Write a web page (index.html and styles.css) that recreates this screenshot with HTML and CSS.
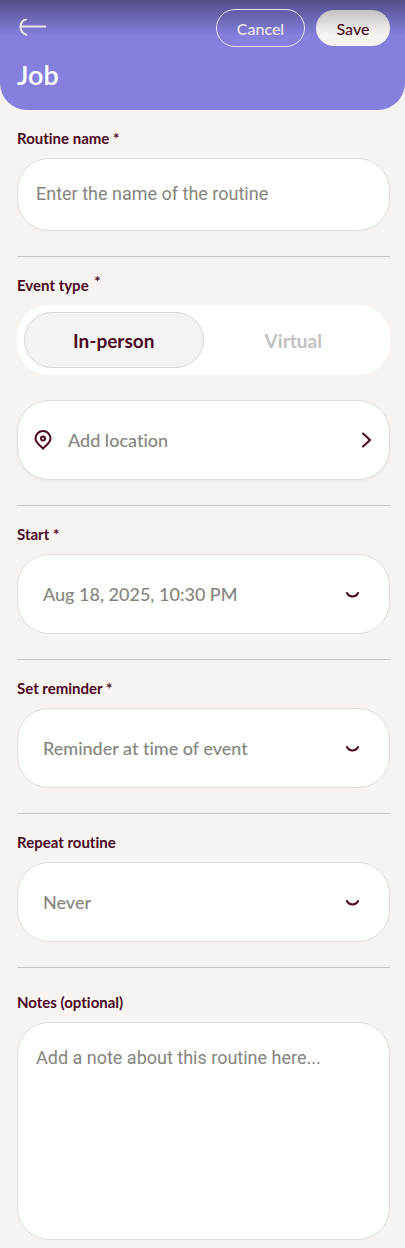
FILE: index.html
```html
<!DOCTYPE html>
<html lang="en">
  <head>
    <title>Job</title>
    <meta charset="utf-8" />
    <meta name="viewport" content="width=device-width, initial-scale=1" />
    <link rel="stylesheet" href="styles.css">
  </head>
  <body>
    <form>
      <header class="header">
        <div class="toolbar">
          <a class="back" href="#" aria-label="Back">
            <svg width="28" height="18" viewBox="0 0 28 18">
              <path d="M8 0C3.500 1 1.500 4.500 1.500 8S3.500 14.500 8 16M1.500 7.500H27" />
            </svg>
          </a>
          <button class="btn btn-outline" type="button">Cancel</button>
          <button class="btn btn-solid" type="submit">Save</button>
        </div>
        <h1>Job</h1>
      </header>

      <main>
        <section>
          <label class="label" for="name">Routine name *</label>
          <input class="box name" id="name" type="text" placeholder="Enter the name of the routine" />
        </section>

        <section>
          <div class="label" id="type-label">Event type <sup>*</sup></div>
          <div class="segment" role="radiogroup" aria-labelledby="type-label">
            <label class="option"><input type="radio" name="type" checked />In-person</label>
            <label class="option"><input type="radio" name="type" />Virtual</label>
          </div>
          <button class="box location" type="button">
            <svg class="pin" width="18" height="20" viewBox="0 0 18 20">
              <path d="M9 18.500C7.500 16 1.500 13.500 1.500 8.500a7.500 7.500 0 0 1 15 0C16.500 13.500 10.500 16 9 18.500Z" />
              <circle cx="9" cy="8.500" r="2" />
            </svg>
            <span>Add location</span>
            <svg class="next" width="10" height="17" viewBox="0 0 10 17">
              <path d="M2 1.500L9 8L2 14.500" />
            </svg>
          </button>
        </section>

        <section>
          <label class="label" for="start">Start *</label>
          <div class="box picker">
            <input id="start" type="text" value="Aug 18, 2025, 10:30 PM" readonly />
            <svg width="14" height="8" viewBox="0 0 14 8">
              <path d="M2 3C4 7.500 11 7.500 13 3" />
            </svg>
          </div>
        </section>

        <section>
          <label class="label" for="reminder">Set reminder *</label>
          <div class="box picker">
            <select id="reminder">
              <option>Reminder at time of event</option>
            </select>
            <svg width="14" height="8" viewBox="0 0 14 8">
              <path d="M2 3C4 7.500 11 7.500 13 3" />
            </svg>
          </div>
        </section>

        <section>
          <label class="label" for="repeat">Repeat routine</label>
          <div class="box picker">
            <select id="repeat">
              <option>Never</option>
            </select>
            <svg width="14" height="8" viewBox="0 0 14 8">
              <path d="M2 3C4 7.500 11 7.500 13 3" />
            </svg>
          </div>
        </section>

        <section class="last">
          <label class="label" for="notes">Notes (optional)</label>
          <textarea class="box notes" id="notes" placeholder="Add a note about this routine here..."></textarea>
        </section>
      </main>
    </form>
  </body>
</html>
```
FILE: styles.css
```css
* {
  box-sizing: border-box;
}

body {
  margin: 0;
  background: #f7f3f1;
  color: #4b0823;
  font-family: Lato, sans-serif;
  font-variant-ligatures: none;
}

button,
input,
select,
textarea {
  font-family: inherit;
  font-variant-ligatures: inherit;
  font-weight: 500;
}

svg {
  flex: none;
  fill: none;
  stroke: #4b0823;
  stroke-width: 2;
  stroke-linecap: round;
}

.header {
  padding: 9px 15px 19px 17px;
  border-radius: 0 0 27px 27px;
  background: linear-gradient(rgba(0, 0, 0, 0.38), rgba(0, 0, 0, 0) 36px), #867fde;
}

.toolbar {
  display: flex;
  align-items: center;
  gap: 11px;
}

.back {
  display: flex;
  margin-right: auto;
  padding-left: 2px;
}

.back svg {
  stroke: #e8e3e8;
  stroke-linecap: butt;
}

.btn {
  border-radius: 19px;
  font-size: 16px;
}

.btn-outline {
  width: 89px;
  height: 38px;
  border: 1px solid #e9e5ef;
  background: none;
  color: #ebe7ee;
}

.btn-solid {
  width: 74px;
  height: 36px;
  border: 0;
  background: linear-gradient(#c4c1c2, #f7f3f1 24px);
  color: #4b0823;
}

h1 {
  margin: 12px 0 0;
  color: white;
  font-size: 27px;
  font-weight: 600;
  line-height: 32px;
}

main {
  padding: 0 15px 8px 17px;
}

section {
  padding: 18px 0 25px;
  border-bottom: 1px solid #c9c6c4;
}

.last {
  padding: 24px 0 0;
  border: 0;
}

.label {
  display: block;
  margin-bottom: 10px;
  font-size: 15px;
  font-weight: bold;
  line-height: 20px;
}

.label sup {
  margin-left: 2px;
  font-size: 15px;
  line-height: 0;
  vertical-align: 4px;
}

.box {
  display: flex;
  align-items: center;
  width: 100%;
  height: 80px;
  border: 1px solid #dedddc;
  border-radius: 32px;
  background: white;
  color: #85857d;
  font-size: 18px;
}

.name,
.notes {
  padding: 0 18px;
  font-family: Roboto, sans-serif;
  font-weight: 400;
}

.name {
  height: 73px;
  padding-bottom: 2px;
}

.notes {
  display: block;
  height: 218px;
  padding-top: 24px;
  line-height: 22px;
  resize: none;
}

::placeholder {
  color: #85857d;
}

.segment {
  display: flex;
  height: 70px;
  margin-bottom: 25px;
  padding: 7px;
  border-radius: 32px;
  background: white;
}

.option {
  display: flex;
  flex: 1;
  align-items: center;
  justify-content: center;
  border: 1px solid transparent;
  border-radius: 28px;
  color: #c2c1c1;
  font-size: 19px;
  font-weight: bold;
}

.option:has(:checked) {
  border-color: #d6d8d8;
  background: #f4f4f4;
  color: #4b0823;
}

.option input {
  width: 0;
  height: 0;
  margin: 0;
  appearance: none;
}

.location {
  padding: 0 18px 0 16px;
  box-shadow: 0 2px 4px rgba(0, 0, 0, 0.04);
}

.pin {
  margin-right: 16px;
}

.next {
  margin-left: auto;
}

.picker {
  padding: 0 30px 0 25px;
}

.picker input,
.picker select {
  flex: 1;
  min-width: 0;
  padding: 0;
  border: 0;
  background: none;
  color: inherit;
  font-size: inherit;
  appearance: none;
}
```
